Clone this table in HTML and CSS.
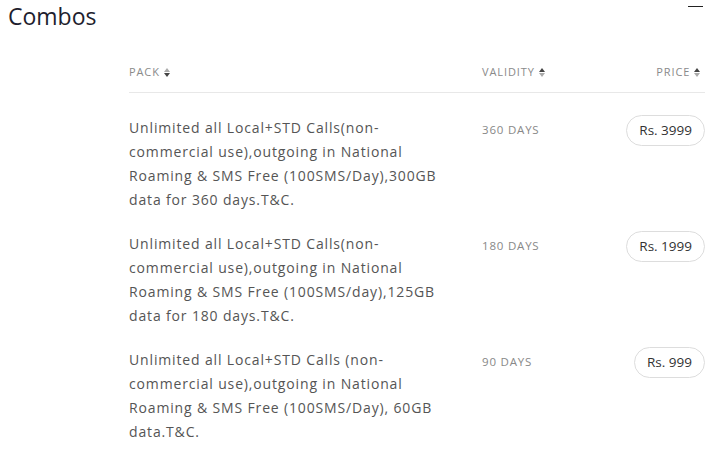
FILE: index.html
```html
<!DOCTYPE html>
<html>
<head>
<meta charset="utf-8">
<link rel="stylesheet" href="styles.css">
</head>
<body>
<header class="top">
  <h1 class="title">Combos</h1>
  <span class="collapse"></span>
</header>
<div class="plans">
  <div class="row head">
    <div class="col pack">PACK <svg class="sort" width="6" height="9" viewBox="0 0 6 9"><path d="M3 0L6 4H0Z" fill="#aaa"/><path d="M3 9L6 5H0Z" fill="#444"/></svg></div>
    <div class="col validity">VALIDITY <svg class="sort" width="6" height="9" viewBox="0 0 6 9"><path d="M3 0L6 4H0Z" fill="#444"/><path d="M3 9L6 5H0Z" fill="#aaa"/></svg></div>
    <div class="col price">PRICE <svg class="sort" width="6" height="9" viewBox="0 0 6 9"><path d="M3 0L6 4H0Z" fill="#444"/><path d="M3 9L6 5H0Z" fill="#aaa"/></svg></div>
  </div>
  <div class="row item">
    <div class="col pack desc">Unlimited all Local+STD Calls(non-commercial use),outgoing in National Roaming &amp; SMS Free (100SMS/Day),300GB data for 360 days.T&amp;C.</div>
    <div class="col validity days">360 DAYS</div>
    <div class="col price"><span class="pill">Rs. 3999</span></div>
  </div>
  <div class="row item">
    <div class="col pack desc">Unlimited all Local+STD Calls(non-commercial use),outgoing in National Roaming &amp; SMS Free (100SMS/day),125GB data for 180 days.T&amp;C.</div>
    <div class="col validity days">180 DAYS</div>
    <div class="col price"><span class="pill">Rs. 1999</span></div>
  </div>
  <div class="row item">
    <div class="col pack desc">Unlimited all Local+STD Calls (non-commercial use),outgoing in National Roaming &amp; SMS Free (100SMS/Day), 60GB data.T&amp;C.</div>
    <div class="col validity days">90 DAYS</div>
    <div class="col price"><span class="pill">Rs. 999</span></div>
  </div>
</div>
</body>
</html>
```

FILE: styles.css
```css
* { box-sizing: border-box; }
body {
  margin: 0;
  background: #fff;
  font-family: "Open Sans", "Noto Sans", sans-serif;
  color: #444;
}
.top {
  display: flex;
  justify-content: space-between;
  align-items: flex-start;
  padding: 0 15px 0 8px;
}
.title {
  margin: 0;
  font-size: 23px;
  font-weight: 400;
  color: #1e1e2e;
  line-height: 32px;
}
.collapse {
  display: block;
  width: 15px;
  height: 1px;
  background: #222;
  margin-top: 6px;
}
.plans {
  margin: 23px 13px 0 129px;
}
.row {
  display: grid;
  grid-template-columns: 353px 1fr auto;
}
.head {
  font-size: 11px;
  color: #8a8a8a;
  letter-spacing: 0.9px;
  height: 38px;
  border-bottom: 1px solid #e8e8e8;
  align-items: start;
  padding-top: 9px;
}
.head .price { padding-right: 5px; }
.sort { margin-left: 0; vertical-align: -1px; }
.price { text-align: right; }
.item {
  padding: 23px 0 0;
  align-items: start;
}
.item + .item { padding-top: 20px; }
.desc {
  font-size: 14px;
  line-height: 24px;
  color: #555;
  letter-spacing: 0.85px;
  padding-right: 30px;
}
.days {
  font-size: 11.5px;
  color: #888;
  letter-spacing: 0.8px;
  padding-top: 6px;
}
.pill {
  display: inline-block;
  border: 1px solid #ddd;
  border-radius: 16px;
  padding: 0 12px;
  height: 31px;
  line-height: 29px;
  font-size: 13.5px;
  color: #333;
  margin-top: -1px;
}
```
